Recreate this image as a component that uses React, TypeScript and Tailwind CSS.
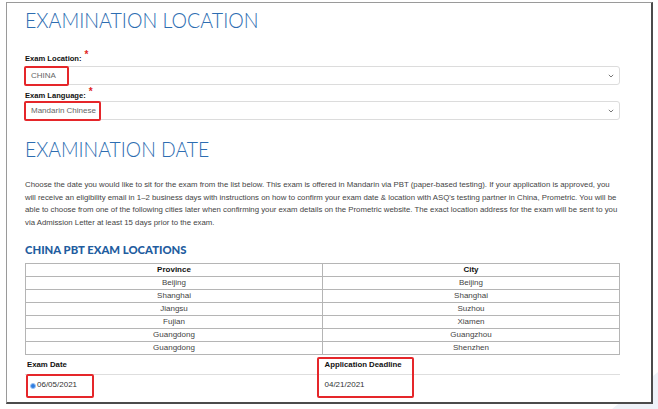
import React from "react";

const rows: [string, string][] = [
  ["Beijing", "Beijing"],
  ["Shanghai", "Shanghai"],
  ["Jiangsu", "Suzhou"],
  ["Fujian", "Xiamen"],
  ["Guangdong", "Guangzhou"],
  ["Guangdong", "Shenzhen"],
];

const Chevron = () => (
  <svg width="6" height="4" viewBox="0 0 6 4" className="text-[#777]">
    <path d="M0.8 0.8 L3 3 L5.2 0.8" fill="none" stroke="currentColor" strokeWidth="1" />
  </svg>
);

const Label = ({ text, className = "" }: { text: string; className?: string }) => (
  <div className={`flex items-start h-[10px] leading-[10px] text-[7.6px] font-bold text-[#111] ${className}`}>
    <span>{text}</span>
    <span className="ml-[3px] -mt-[4px] text-[10px] text-[#e02424]">*</span>
  </div>
);

const SelectBox = ({ value, mark }: { value: string; mark: string }) => (
  <div className="relative ml-[-1px] w-[596px] h-[19px] border border-[#dcdcdc] rounded-[3px] flex items-center justify-between pl-[6px] pr-[5px] text-[8px] text-[#666]">
    <span>{value}</span>
    <Chevron />
    <div className={`absolute -left-[1px] -top-[1px] h-[20px] border-2 border-[#e5262a] rounded-[2px] ${mark}`} />
  </div>
);

export default function App() {
  return (
    <div
      className="relative w-[658px] h-[409px] bg-white overflow-hidden"
      style={{ fontFamily: "'Liberation Sans', Arial, sans-serif" }}
    >
      <svg className="absolute left-0 top-0" width="658" height="409">
        <polygon points="440,409 658,409 658,372 612,409" fill="#eef2f8" />
      </svg>
      <div className="relative ml-[6px] mt-[2px] w-[647px] h-[402px] bg-white border-l border-t border-[#9a9a9a] border-r-2 border-b-2 border-r-[#4b4b4b] border-b-[#4b4b4b] pl-[18px] pr-[31px]">
        <h1 className="mt-[3px] h-[28px] leading-[28px] text-[22px] font-light text-[#2d6db1] origin-left scale-x-[0.89] whitespace-nowrap font-['Lato',sans-serif]">
          EXAMINATION LOCATION
        </h1>

        <Label text="Exam Location:" className="mt-[20px]" />
        <div className="mt-[2px]">
          <SelectBox value="CHINA" mark="w-[45px]" />
        </div>

        <Label text="Exam Language:" className="mt-[6px]" />
        <div>
          <SelectBox value="Mandarin Chinese" mark="w-[77px]" />
        </div>

        <h1 className="mt-[15px] h-[28px] leading-[28px] text-[22px] font-light text-[#2d6db1] origin-left scale-x-[0.88] whitespace-nowrap font-['Lato',sans-serif]">
          EXAMINATION DATE
        </h1>

        <p className="mt-[16px] text-[7.8px] leading-[12.5px] text-[#444] whitespace-nowrap">
          Choose the date you would like to sit for the exam from the list below. This exam is offered in Mandarin via PBT (paper-based testing). If your application is approved, you
          <br />
          will receive an eligibility email in 1–2 business days with instructions on how to confirm your exam date &amp; location with ASQ's testing partner in China, Prometric. You will be
          <br />
          able to choose from one of the following cities later when confirming your exam details on the Prometric website. The exact location address for the exam will be sent to you
          <br />
          via Admission Letter at least 15 days prior to the exam.
        </p>

        <h2 className="mt-[14px] h-[14px] leading-[14px] text-[11.3px] font-black text-[#1f5d9f] whitespace-nowrap font-['Lato',sans-serif]">
          CHINA PBT EXAM LOCATIONS
        </h2>

        <table className="mt-[6px] w-[595px] border-collapse text-[8px] text-[#444] table-fixed">
          <thead>
            <tr className="h-[13px]">
              <th className="border border-[#b5b5b5] font-bold text-[#111] leading-[12px] p-0">Province</th>
              <th className="border border-[#b5b5b5] font-bold text-[#111] leading-[12px] p-0">City</th>
            </tr>
          </thead>
          <tbody>
            {rows.map(([p, c], i) => (
              <tr key={i} className="h-[13px]">
                <td className="border border-[#b5b5b5] text-center leading-[12px] p-0">{p}</td>
                <td className="border border-[#b5b5b5] text-center leading-[12px] p-0">{c}</td>
              </tr>
            ))}
          </tbody>
        </table>

        <div className="relative mt-[5px] w-[595px]">
          <div className="grid grid-cols-2 h-[15px] border-b border-[#dedede] text-[7.8px] font-bold text-[#111] leading-[10px]">
            <div className="pl-[2px]">Exam Date</div>
            <div className="pl-[2px]">Application Deadline</div>
          </div>
          <div className="grid grid-cols-2 h-[19px] items-center text-[8px] text-[#333]">
            <div className="flex items-center pl-[5px]">
              <span className="w-[6px] h-[6px] rounded-full bg-[#2f7de1] border border-[#9cc3f2] mt-[2px]" />
              <span className="ml-[1px]">06/05/2021</span>
            </div>
            <div className="pl-[2px]">04/21/2021</div>
          </div>
          <div className="absolute left-[1px] top-[14px] w-[68px] h-[24px] border-2 border-[#e5262a] rounded-[2px]" />
          <div className="absolute left-[292px] -top-[3px] w-[97px] h-[41px] border-2 border-[#e5262a] rounded-[2px]" />
        </div>
      </div>
    </div>
  );
}
